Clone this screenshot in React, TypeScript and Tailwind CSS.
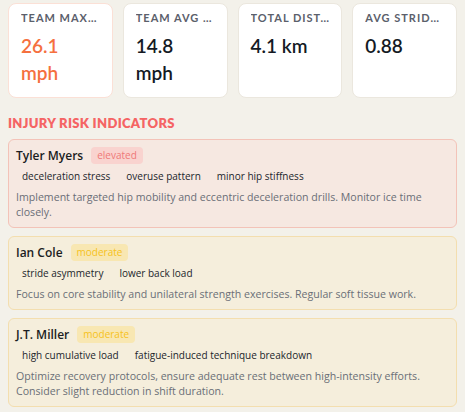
import React from 'react';

interface Stat {
    label: string;
    value: string;
    highlight?: boolean;
}

interface Risk {
    name: string;
    level: 'elevated' | 'moderate';
    factors: string[];
    note: string;
}

const stats: Stat[] = [
    { label: 'TEAM MAX SPEED', value: '26.1 mph', highlight: true },
    { label: 'TEAM AVG SPEED', value: '14.8 mph' },
    { label: 'TOTAL DISTANCE', value: '4.1 km' },
    { label: 'AVG STRIDE EFFICIENCY', value: '0.88' },
];

const risks: Risk[] = [
    {
        name: 'Tyler Myers',
        level: 'elevated',
        factors: ['deceleration stress', 'overuse pattern', 'minor hip stiffness'],
        note: 'Implement targeted hip mobility and eccentric deceleration drills. Monitor ice time closely.',
    },
    {
        name: 'Ian Cole',
        level: 'moderate',
        factors: ['stride asymmetry', 'lower back load'],
        note: 'Focus on core stability and unilateral strength exercises. Regular soft tissue work.',
    },
    {
        name: 'J.T. Miller',
        level: 'moderate',
        factors: ['high cumulative load', 'fatigue-induced technique breakdown'],
        note: 'Optimize recovery protocols, ensure adequate rest between high-intensity efforts. Consider slight reduction in shift duration.',
    },
];

function StatCard({ stat }: { stat: Stat }) {
    return (
        <div
            className={`h-[95px] rounded-lg bg-white px-3 pt-[7px] border ${
                stat.highlight ? 'border-[#fbe0d6]' : 'border-[#ebe7de]'
            }`}
        >
            <div className="truncate text-[11px] leading-[14px] font-bold tracking-[0.09em] text-[#5b606b] font-['Lato',sans-serif]">
                {stat.label}
            </div>
            <div
                className={`mt-[7px] text-[19px] leading-[27px] font-semibold font-['Lato',sans-serif] ${
                    stat.highlight ? 'text-[#f5703f]' : 'text-[#141a24]'
                }`}
            >
                {stat.value}
            </div>
        </div>
    );
}

function RiskCard({ risk }: { risk: Risk }) {
    const elevated = risk.level === 'elevated';
    return (
        <div
            className={`rounded-md border px-[7px] pt-[7px] pb-[7px] ${
                elevated ? 'bg-[#f6e8e1] border-[#f3c3b8]' : 'bg-[#f5eedc] border-[#f3deaf]'
            }`}
        >
            <div className="flex items-center gap-2">
                <span className="text-[12px] leading-[17px] font-semibold text-[#1b1d22]">{risk.name}</span>
                <span
                    className={`rounded px-1.5 text-[10px] leading-[17px] ${
                        elevated ? 'bg-[#f9d3cf] text-[#ef7878]' : 'bg-[#f8e7b2] text-[#f6c21c]'
                    }`}
                >
                    {risk.level}
                </span>
            </div>
            <div className="mt-[3px] flex flex-wrap gap-1">
                {risk.factors.map((f) => (
                    <span key={f} className="rounded px-1.5 py-[2px] text-[10px] leading-[14px] text-[#22252b]">
                        {f}
                    </span>
                ))}
            </div>
            <p className="mt-[5px] text-[10.6px] leading-[15px] text-[#6a6e77]">{risk.note}</p>
        </div>
    );
}

export default function App() {
    return (
        <div className="min-h-screen bg-[#f3f1ea] px-2 pt-[3px] font-['Open_Sans',sans-serif]">
            <div className="grid grid-cols-4 gap-[10px]">
                {stats.map((s) => (
                    <StatCard key={s.label} stat={s} />
                ))}
            </div>

            <h2 className="mt-[18px] mb-[9px] text-[13px] leading-[14px] font-extrabold tracking-wide text-[#f56464] font-['Lato',sans-serif]">
                INJURY RISK INDICATORS
            </h2>

            <div className="flex flex-col gap-2">
                {risks.map((r) => (
                    <RiskCard key={r.name} risk={r} />
                ))}
            </div>
        </div>
    );
}
